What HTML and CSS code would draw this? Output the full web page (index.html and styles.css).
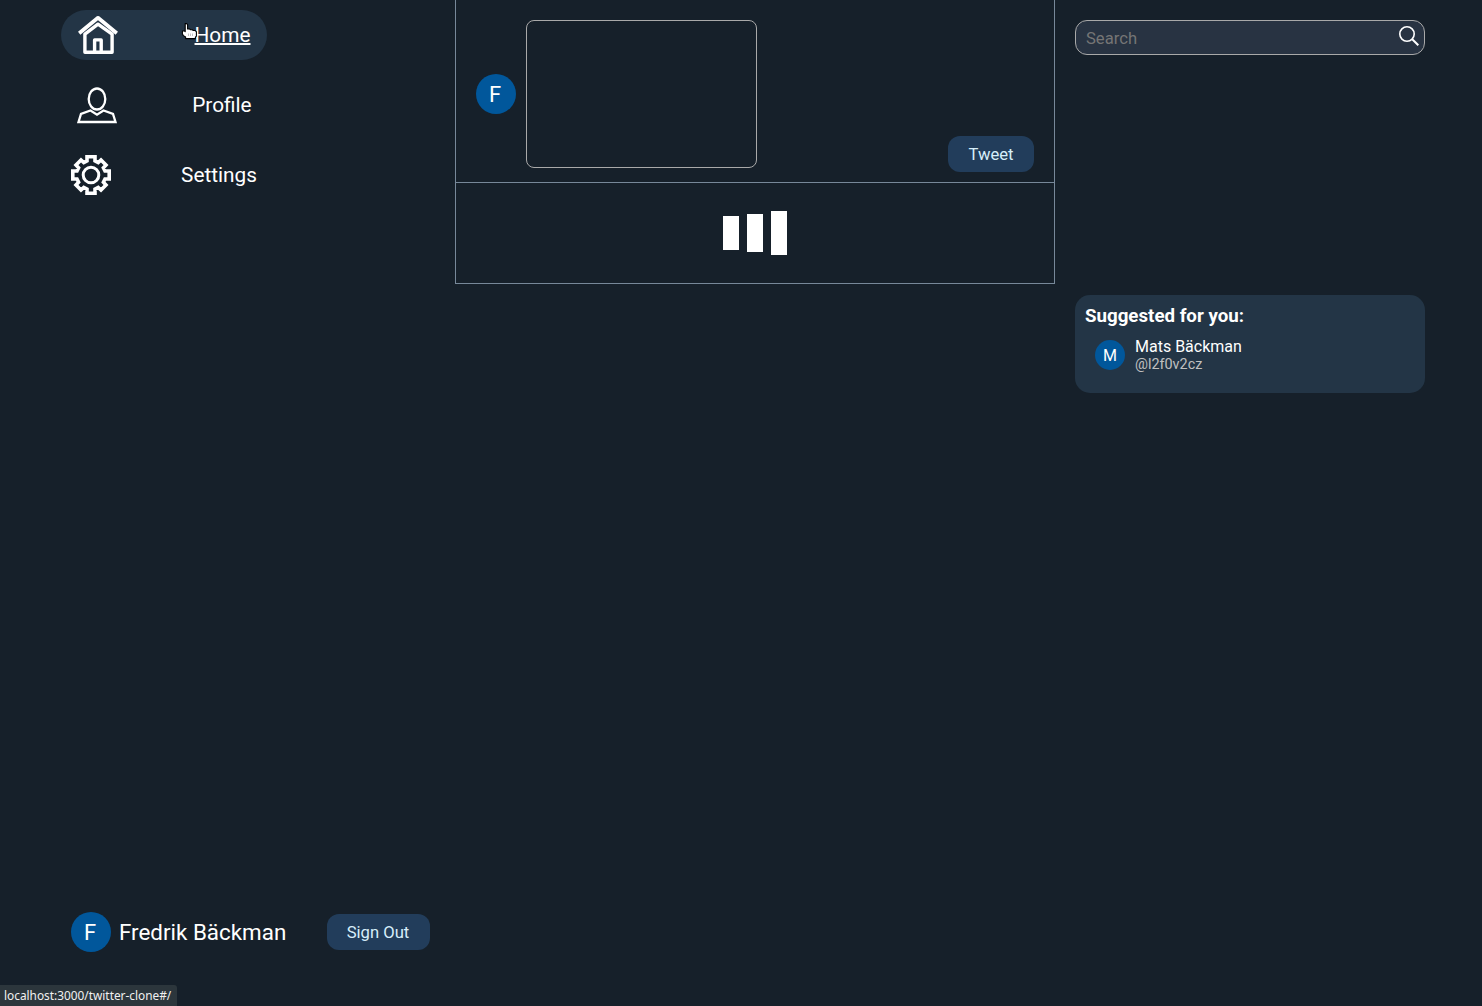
FILE: index.html
```html
<!DOCTYPE html>
<html lang="en">
<head>
<meta charset="utf-8">
<title>Twitter clone</title>
<link rel="stylesheet" href="styles.css">
</head>
<body>
<div class="app">
  <aside class="sidebar">
    <nav class="nav">
      <a class="nav-item nav-home" href="#/">
        <svg class="icon" viewBox="0 0 40 40" fill="none" stroke="#fff" stroke-width="3.4"><path stroke-width="3.7" stroke-linejoin="round" d="M1.2 18.3 20 2.8 38.8 18.3"/><path stroke-linejoin="round" d="M6.9 37.3V19.2L20 9.2 34.1 19.2V37.3Z"/><path stroke-linejoin="round" d="M16.6 37V24.9H23.2V37"/></svg>
        <span>Home</span>
        <svg class="pointer" viewBox="0 0 17 18"><path d="M4.2 1.6h1.4l1 1V7h2l.8.7h2l.6.8h2l1.4 1.2v4.5l-1 1v1.4H4.6v-1.6L2.4 13.6 1.4 12V9h2.2l.6.6Z" fill="#fff" stroke="#000" stroke-width="1.1" stroke-linejoin="round"/><path d="M7.5 11.5v2.5M9.5 11.5v2.5M11.5 11.5v2.5" stroke="#999" stroke-width=".6"/></svg>
      </a>
      <a class="nav-item nav-profile" href="#/profile">
        <svg class="icon" viewBox="0 0 40 40" fill="none" stroke="#fff" stroke-width="2.3"><ellipse cx="20" cy="14" rx="8.3" ry="10.5"/><path d="M1.5 37 4 28.8 13.5 25.5 20 29.6 26.5 25.5 36 28.8 38.5 37Z"/></svg>
        <span>Profile</span>
      </a>
      <a class="nav-item nav-settings" href="#/settings">
        <svg class="icon" viewBox="0 0 40 40" fill="none" stroke="#fff" stroke-width="3.6"><path d="M16 1.8H24V6L27.2 7.6 30 5 35 10 32.4 12.8 34 16H38.2V24H34L32.4 27.2 35 30 30 35 27.2 32.4 24 34V38.2H16V34L12.8 32.4 10 35 5 30 7.6 27.2 6 24H1.8V16H6L7.6 12.8 5 10 10 5 12.8 7.6 16 6Z"/><circle cx="20" cy="20" r="7.8" stroke-width="3"/></svg>
        <span>Settings</span>
      </a>
    </nav>
    <div class="account">
      <div class="avatar">F</div>
      <span class="account-name">Fredrik Bäckman</span>
      <button class="button sign-out">Sign Out</button>
    </div>
  </aside>
  <main class="feed">
    <form class="compose">
      <div class="avatar">F</div>
      <textarea class="tweet-input" aria-label="Tweet"></textarea>
      <button class="button tweet" type="button">Tweet</button>
    </form>
    <div class="loader"><i class="bar bar-short"></i><i class="bar bar-medium"></i><i class="bar bar-tall"></i></div>
  </main>
  <aside class="discover">
    <label class="search">
      <input type="text" placeholder="Search">
      <svg class="search-icon" viewBox="0 0 20 20" fill="none" stroke="#fff"><circle cx="8" cy="8" r="7.2" stroke-width="1.6"/><path d="M13 13 19.3 19.3" stroke-width="2"/></svg>
    </label>
    <section class="suggested">
      <h3>Suggested for you:</h3>
      <div class="person">
        <div class="avatar avatar-small">M</div>
        <div class="person-text"><div class="person-name">Mats Bäckman</div><div class="person-handle">@l2f0v2cz</div></div>
      </div>
    </section>
  </aside>
</div>
<div class="status">localhost:3000/twitter-clone#/</div>
</body>
</html>
```
FILE: styles.css
```css
* { box-sizing: border-box; }
body { margin: 0; background: #17202a; background: #16202a; color: #fff; font-family: Roboto, sans-serif; font-size: 16px; overflow: hidden; }
.app { display: grid; grid-template-columns: 455px 600px 1fr; height: 100vh; }
.sidebar { display: flex; flex-direction: column; justify-content: space-between; padding: 10px 25px 54px 61px; }
.nav { display: flex; flex-direction: column; align-items: flex-start; gap: 20px; }
.nav-item { position: relative; display: flex; align-items: center; justify-content: space-between; width: 206px; height: 50px; border-radius: 25px; color: #fff; font-size: 20.8px; text-decoration: none; }
.icon { width: 40px; height: 40px; flex: none; }
.nav-home { padding: 0 16.5px 0 17px; background: #233546; text-decoration: underline 2px; }
.nav-profile { padding: 0 15.4px 0 16px; }
.nav-settings { padding: 0 10px; }
.pointer { position: absolute; left: 120px; top: 12px; width: 17px; height: 18px; }
.avatar { display: flex; align-items: center; justify-content: center; flex: none; width: 40px; height: 40px; padding-right: 2px; border-radius: 50%; background: #01579b; font-size: 22px; }
.avatar-small { width: 30px; height: 30px; padding: 1px 0 0; font-size: 16px; }
.account { display: flex; align-items: center; padding-left: 10px; }
.account-name { margin-left: 8px; font-size: 22.4px; }
.button { height: 36px; padding: 0; border: 0; border-radius: 12px; background: #223d5b; color: #d6eefa; font: 16.64px Roboto, sans-serif; }
.sign-out { width: 103px; margin-left: auto; padding-right: 1px; }
.feed { align-self: start; border: 1px solid #778899; border-top: 0; }
.compose { display: flex; align-items: center; height: 183px; padding: 20px 20px 14px; border-bottom: 1px solid #778899; }
.tweet-input { width: 231px; height: 148px; margin-left: 10px; border: 1px solid #a9a9a9; border-radius: 8px; background: transparent; resize: none; }
.tweet { align-self: flex-end; width: 86px; margin: 0 0 -4px auto; }
.loader { display: flex; align-items: center; justify-content: center; gap: 8px; height: 100px; }
.bar { width: 16px; background: #fff; }
.bar-short { height: 34px; }
.bar-medium { height: 38px; }
.bar-tall { height: 44px; }
.discover { width: 350px; margin: 20px; }
.search { display: flex; height: 35px; padding: 0 5px 0 10px; border: 1px solid #a9a9a9; border-radius: 12px; background: #283342; }
.search input { flex: 1; min-width: 0; padding: 1px 0 0; border: 0; background: none; font: 16.64px Roboto, sans-serif; }
.search input::placeholder { color: #757575; }
.search-icon { width: 20px; height: 20px; margin-top: 5px; }
.suggested { height: 98px; margin-top: 240px; padding: 10px; border-radius: 15px; background: #233546; }
.suggested h3 { margin: 0; font-size: 18.72px; line-height: 22px; }
.person { display: flex; align-items: flex-start; gap: 10px; margin: 13px 0 0 10px; line-height: 18px; }
.person-text { margin-top: -2px; }
.person-handle { color: #c0c0c0; font-size: 14.4px; }
.status { position: fixed; left: 0; bottom: 0; width: 177px; height: 21px; padding-left: 4px; border-radius: 0 3px 0 0; background: #2c363c; color: #f1f1f1; font: 11.85px/21px "Noto Sans", sans-serif; white-space: nowrap; }
```
